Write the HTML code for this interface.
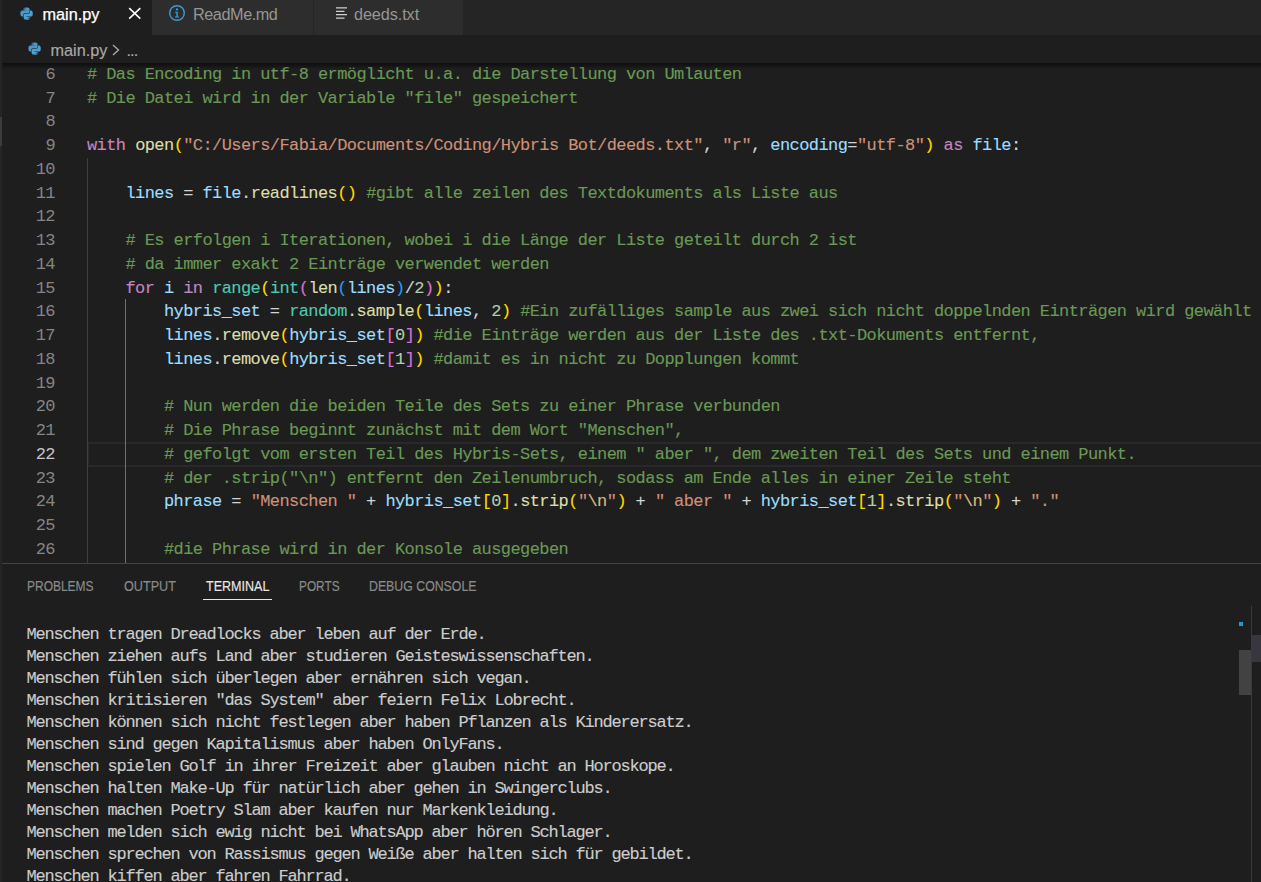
<!DOCTYPE html>
<html lang="de"><head><meta charset="utf-8"><title>main.py - Hybris Bot</title>
<style>

html,body{margin:0;padding:0;background:#1e1e1e;}
body{width:1261px;height:882px;position:relative;overflow:hidden;font-family:"Liberation Sans",sans-serif;color:#d4d4d4;}
.abs{position:absolute;}
#side{left:0;top:0;width:2px;height:882px;background:#252526;}
#sidethumb{left:0;top:117px;width:2px;height:28.5px;background:#3c3c3c;}
#tabs{left:2px;top:0;width:1259px;height:35px;background:#252526;}
.tab{position:absolute;top:0;height:35px;background:#2d2d2d;color:#969696;font-size:16.25px;line-height:35px;white-space:nowrap;}
.tab.act{background:#1e1e1e;color:#fff;-webkit-text-stroke:0.25px;}
.tab .lbl{position:absolute;top:-3px;}
#crumbs{left:2px;top:35px;width:1259px;height:27.5px;background:#1e1e1e;color:#a9a9a9;font-size:16.25px;white-space:nowrap;-webkit-text-stroke:0.15px;}
#shadow{left:2px;top:62.5px;width:1259px;height:6px;background:linear-gradient(#000 0,rgba(0,0,0,0) 100%);opacity:.55;}
#editor{left:2px;top:62.5px;width:1259px;height:501px;overflow:hidden;}
.ln{position:absolute;left:0;width:53px;text-align:right;color:#858585;}
.ln.cur{color:#c6c6c6;}
.code,.ln{font-family:"Liberation Mono","DejaVu Sans Mono",monospace;font-size:17px;letter-spacing:-0.577px;line-height:23.75px;height:23.75px;white-space:pre;}
.code{position:absolute;left:85px;color:#d4d4d4;-webkit-text-stroke:0.12px;}
.c{color:#6a9955}.k{color:#c586c0}.f{color:#dcdcaa}.v{color:#9cdcfe}.s{color:#ce9178}.n{color:#b5cea8}.t{color:#4ec9b0}.p{color:#d4d4d4}.b1{color:#ffd700}.b2{color:#da70d6}.b3{color:#179fff}.e{color:#d7ba7d}
.guide{position:absolute;width:1px;background:#404040;}
#curline{position:absolute;box-sizing:border-box;border:2px solid #292929;border-right:0;}
#panel{left:2px;top:563px;width:1259px;height:319px;background:#1e1e1e;border-top:1px solid #434343;}
.pt{position:absolute;top:0.5px;font-size:13.75px;color:#8b8b8b;line-height:44px;height:44px;white-space:nowrap;transform-origin:0 50%;-webkit-text-stroke:0.15px;}
.pt.act{color:#e7e7e7;}
#term{font-family:"Liberation Mono","DejaVu Sans Mono",monospace;font-size:17px;letter-spacing:-1.2px;line-height:22px;color:#cccccc;white-space:pre;-webkit-text-stroke:0.12px;}
.tl{position:absolute;left:0;height:22px;}

</style></head><body>
<div id="side" class="abs"></div><div id="sidethumb" class="abs"></div>
<div id="tabs" class="abs">
<div class="tab act" style="left:0;width:150px"><svg class="abs" style="left:18.3px;top:6.5px" width="13.2" height="13.2" viewBox="0 0 32 32"><path fill="#4a98c9" d="M15.9 1c-7.6 0-7.1 3.3-7.1 3.3v3.4h7.3v1H5.9S1 8.200 1 15.900s4.300 7.400 4.300 7.400h2.500v-3.600s-.100-4.300 4.200-4.300h7.200s4 .100 4-3.900V5.100S23.800 1 15.900 1zm-4 2.300a1.300 1.300 0 110 2.600 1.300 1.300 0 010-2.600z"/><path fill="#4e9fd0" d="M16.100 31c7.600 0 7.100-3.300 7.100-3.300v-3.400h-7.300v-1h10.200S31 23.800 31 16.100s-4.300-7.400-4.300-7.400h-2.500v3.600s.100 4.300-4.200 4.300h-7.200s-4-.100-4 3.900v6.400S8.200 31 16.100 31zm4-2.300a1.300 1.300 0 110-2.600 1.300 1.300 0 010 2.600z"/></svg><span class="lbl" style="left:40.5px">main.py</span><svg class="abs" style="left:125.500px;top:7px" width="14" height="13" viewBox="0 0 14 13"><path d="M1.200 1.200L12.300 11.600M12.300 1.200L1.200 11.600" stroke="#fff" stroke-width="1.600" fill="none"/></svg></div>
<div class="tab" style="left:150px;width:161px"><svg class="abs" style="left:16px;top:4px" width="18" height="18" viewBox="0 0 18 18"><circle cx="9" cy="9" r="7.300" fill="none" stroke="#3b9bd6" stroke-width="1.400"/><circle cx="9" cy="5.400" r="1.100" fill="#3b9bd6"/><path d="M7.300 7.800h2.500v4.700h1.200v1.100H7v-1.100h1.400V8.900H7.300z" fill="#3b9bd6"/></svg><span class="lbl" style="left:41px;letter-spacing:-0.45px">ReadMe.md</span></div>
<div class="tab" style="left:312px;width:149px"><svg class="abs" style="left:22px;top:6px" width="12" height="14" viewBox="0 0 12 14"><path d="M0 1.900h11M0 5.300h8.500M0 8.700h11M0 12.100h8.500" stroke="#d0d0d0" stroke-width="1.300" fill="none"/></svg><span class="lbl" style="left:40px;letter-spacing:-0.1px">deeds.txt</span></div>
</div>
<div id="crumbs" class="abs"><svg class="abs" style="left:26.3px;top:6.5px" width="13.2" height="13.2" viewBox="0 0 32 32"><path fill="#4a98c9" d="M15.9 1c-7.6 0-7.1 3.3-7.1 3.3v3.4h7.3v1H5.9S1 8.200 1 15.900s4.300 7.400 4.300 7.400h2.500v-3.600s-.100-4.300 4.200-4.300h7.200s4 .100 4-3.900V5.100S23.800 1 15.900 1zm-4 2.300a1.300 1.300 0 110 2.600 1.300 1.300 0 010-2.600z"/><path fill="#4e9fd0" d="M16.100 31c7.600 0 7.100-3.300 7.100-3.300v-3.400h-7.300v-1h10.200S31 23.800 31 16.100s-4.300-7.400-4.300-7.400h-2.500v3.600s.100 4.300-4.200 4.300h-7.200s-4-.100-4 3.900v6.400S8.200 31 16.100 31zm4-2.300a1.300 1.300 0 110-2.600 1.300 1.300 0 010 2.600z"/></svg><span class="abs" style="left:48.5px;top:1.5px;line-height:27px">main.py</span><svg class="abs" style="left:109px;top:9px" width="10" height="12" viewBox="0 0 10 12"><path d="M2 1l5.500 5L2 11" stroke="#a9a9a9" stroke-width="1.400" fill="none"/></svg><span class="abs" style="left:124.5px;top:1.5px;line-height:27px;letter-spacing:-0.9px">...</span></div>
<div id="editor" class="abs">
<div id="curline" style="left:85px;top:379.3px;width:1174px;height:24.95px"></div>
<div class="guide" style="left:85px;top:95.3px;height:600px"></div>
<div class="guide" style="left:123px;top:236.8px;height:600px;background:#707070"></div>
<div class="ln" style="top:0.3px">6</div>
<div class="code" style="top:0.3px"><span class="c"># Das Encoding in utf-8 ermöglicht u.a. die Darstellung von Umlauten</span></div>
<div class="ln" style="top:24.05px">7</div>
<div class="code" style="top:24.05px"><span class="c"># Die Datei wird in der Variable "file" gespeichert</span></div>
<div class="ln" style="top:47.8px">8</div>
<div class="ln" style="top:71.55px">9</div>
<div class="code" style="top:71.55px"><span class="k">with</span><span class="p"> </span><span class="f">open</span><span class="b1">(</span><span class="s">"C:/Users/Fabia/Documents/Coding/Hybris Bot/deeds.txt"</span><span class="p">, </span><span class="s">"r"</span><span class="p">, </span><span class="v">encoding</span><span class="p">=</span><span class="s">"utf-8"</span><span class="b1">)</span><span class="p"> </span><span class="k">as</span><span class="p"> </span><span class="v">file</span><span class="p">:</span></div>
<div class="ln" style="top:95.3px">10</div>
<div class="ln" style="top:119.05px">11</div>
<div class="code" style="top:119.05px"><span class="p">    </span><span class="v">lines</span><span class="p"> = </span><span class="v">file</span><span class="p">.</span><span class="f">readlines</span><span class="b1">()</span><span class="p"> </span><span class="c">#gibt alle zeilen des Textdokuments als Liste aus</span></div>
<div class="ln" style="top:142.8px">12</div>
<div class="ln" style="top:166.55px">13</div>
<div class="code" style="top:166.55px"><span class="p">    </span><span class="c"># Es erfolgen i Iterationen, wobei i die Länge der Liste geteilt durch 2 ist</span></div>
<div class="ln" style="top:190.3px">14</div>
<div class="code" style="top:190.3px"><span class="p">    </span><span class="c"># da immer exakt 2 Einträge verwendet werden</span></div>
<div class="ln" style="top:214.05px">15</div>
<div class="code" style="top:214.05px"><span class="p">    </span><span class="k">for</span><span class="p"> </span><span class="v">i</span><span class="p"> </span><span class="k">in</span><span class="p"> </span><span class="t">range</span><span class="b1">(</span><span class="t">int</span><span class="b2">(</span><span class="f">len</span><span class="b3">(</span><span class="v">lines</span><span class="b3">)</span><span class="p">/</span><span class="n">2</span><span class="b2">)</span><span class="b1">)</span><span class="p">:</span></div>
<div class="ln" style="top:237.8px">16</div>
<div class="code" style="top:237.8px"><span class="p">        </span><span class="v">hybris_set</span><span class="p"> = </span><span class="t">random</span><span class="p">.</span><span class="f">sample</span><span class="b1">(</span><span class="v">lines</span><span class="p">, </span><span class="n">2</span><span class="b1">)</span><span class="p"> </span><span class="c">#Ein zufälliges sample aus zwei sich nicht doppelnden Einträgen wird gewählt</span></div>
<div class="ln" style="top:261.55px">17</div>
<div class="code" style="top:261.55px"><span class="p">        </span><span class="v">lines</span><span class="p">.</span><span class="f">remove</span><span class="b1">(</span><span class="v">hybris_set</span><span class="b2">[</span><span class="n">0</span><span class="b2">]</span><span class="b1">)</span><span class="p"> </span><span class="c">#die Einträge werden aus der Liste des .txt-Dokuments entfernt,</span></div>
<div class="ln" style="top:285.3px">18</div>
<div class="code" style="top:285.3px"><span class="p">        </span><span class="v">lines</span><span class="p">.</span><span class="f">remove</span><span class="b1">(</span><span class="v">hybris_set</span><span class="b2">[</span><span class="n">1</span><span class="b2">]</span><span class="b1">)</span><span class="p"> </span><span class="c">#damit es in nicht zu Dopplungen kommt</span></div>
<div class="ln" style="top:309.05px">19</div>
<div class="ln" style="top:332.8px">20</div>
<div class="code" style="top:332.8px"><span class="p">        </span><span class="c"># Nun werden die beiden Teile des Sets zu einer Phrase verbunden</span></div>
<div class="ln" style="top:356.55px">21</div>
<div class="code" style="top:356.55px"><span class="p">        </span><span class="c"># Die Phrase beginnt zunächst mit dem Wort "Menschen",</span></div>
<div class="ln cur" style="top:380.3px">22</div>
<div class="code" style="top:380.3px"><span class="p">        </span><span class="c"># gefolgt vom ersten Teil des Hybris-Sets, einem " aber ", dem zweiten Teil des Sets und einem Punkt.</span></div>
<div class="ln" style="top:404.05px">23</div>
<div class="code" style="top:404.05px"><span class="p">        </span><span class="c"># der .strip("\n") entfernt den Zeilenumbruch, sodass am Ende alles in einer Zeile steht</span></div>
<div class="ln" style="top:427.8px">24</div>
<div class="code" style="top:427.8px"><span class="p">        </span><span class="v">phrase</span><span class="p"> = </span><span class="s">"Menschen "</span><span class="p"> + </span><span class="v">hybris_set</span><span class="b1">[</span><span class="n">0</span><span class="b1">]</span><span class="p">.</span><span class="f">strip</span><span class="b1">(</span><span class="s">"</span><span class="e">\n</span><span class="s">"</span><span class="b1">)</span><span class="p"> + </span><span class="s">" aber "</span><span class="p"> + </span><span class="v">hybris_set</span><span class="b1">[</span><span class="n">1</span><span class="b1">]</span><span class="p">.</span><span class="f">strip</span><span class="b1">(</span><span class="s">"</span><span class="e">\n</span><span class="s">"</span><span class="b1">)</span><span class="p"> + </span><span class="s">"."</span></div>
<div class="ln" style="top:451.55px">25</div>
<div class="ln" style="top:475.3px">26</div>
<div class="code" style="top:475.3px"><span class="p">        </span><span class="c">#die Phrase wird in der Konsole ausgegeben</span></div>
</div>
<div id="shadow" class="abs"></div>
<div id="panel" class="abs">
<div class="pt" style="left:25.2px;transform:scaleX(0.871)">PROBLEMS</div>
<div class="pt" style="left:121.8px;transform:scaleX(0.918)">OUTPUT</div>
<div class="pt act" style="left:204.1px;transform:scaleX(0.913)">TERMINAL</div>
<div class="pt" style="left:297px;transform:scaleX(0.861)">PORTS</div>
<div class="pt" style="left:367.4px;transform:scaleX(0.896)">DEBUG CONSOLE</div>
<div class="abs" style="left:201px;top:35px;width:69px;height:1px;background:#e7e7e7"></div>
<div id="term" class="abs" style="left:24.5px;top:59.5px;width:1200px;height:300px">
<div class="tl" style="top:0px">Menschen tragen Dreadlocks aber leben auf der Erde.</div>
<div class="tl" style="top:22px">Menschen ziehen aufs Land aber studieren Geisteswissenschaften.</div>
<div class="tl" style="top:44px">Menschen fühlen sich überlegen aber ernähren sich vegan.</div>
<div class="tl" style="top:66px">Menschen kritisieren "das System" aber feiern Felix Lobrecht.</div>
<div class="tl" style="top:88px">Menschen können sich nicht festlegen aber haben Pflanzen als Kinderersatz.</div>
<div class="tl" style="top:110px">Menschen sind gegen Kapitalismus aber haben OnlyFans.</div>
<div class="tl" style="top:132px">Menschen spielen Golf in ihrer Freizeit aber glauben nicht an Horoskope.</div>
<div class="tl" style="top:154px">Menschen halten Make-Up für natürlich aber gehen in Swingerclubs.</div>
<div class="tl" style="top:176px">Menschen machen Poetry Slam aber kaufen nur Markenkleidung.</div>
<div class="tl" style="top:198px">Menschen melden sich ewig nicht bei WhatsApp aber hören Schlager.</div>
<div class="tl" style="top:220px">Menschen sprechen von Rassismus gegen Weiße aber halten sich für gebildet.</div>
<div class="tl" style="top:242px">Menschen kiffen aber fahren Fahrrad.</div>
</div>
<div class="abs" style="left:1249px;top:42px;width:1px;height:280px;background:#3a3a3a"></div>
<div class="abs" style="left:1237px;top:58px;width:4px;height:4px;background:#1f9bd2"></div>
<div class="abs" style="left:1237px;top:86px;width:12px;height:45px;background:#424242"></div>
<div class="abs" style="left:1250px;top:71px;width:9px;height:27px;background:#37373d"></div>
</div>
</body></html>
